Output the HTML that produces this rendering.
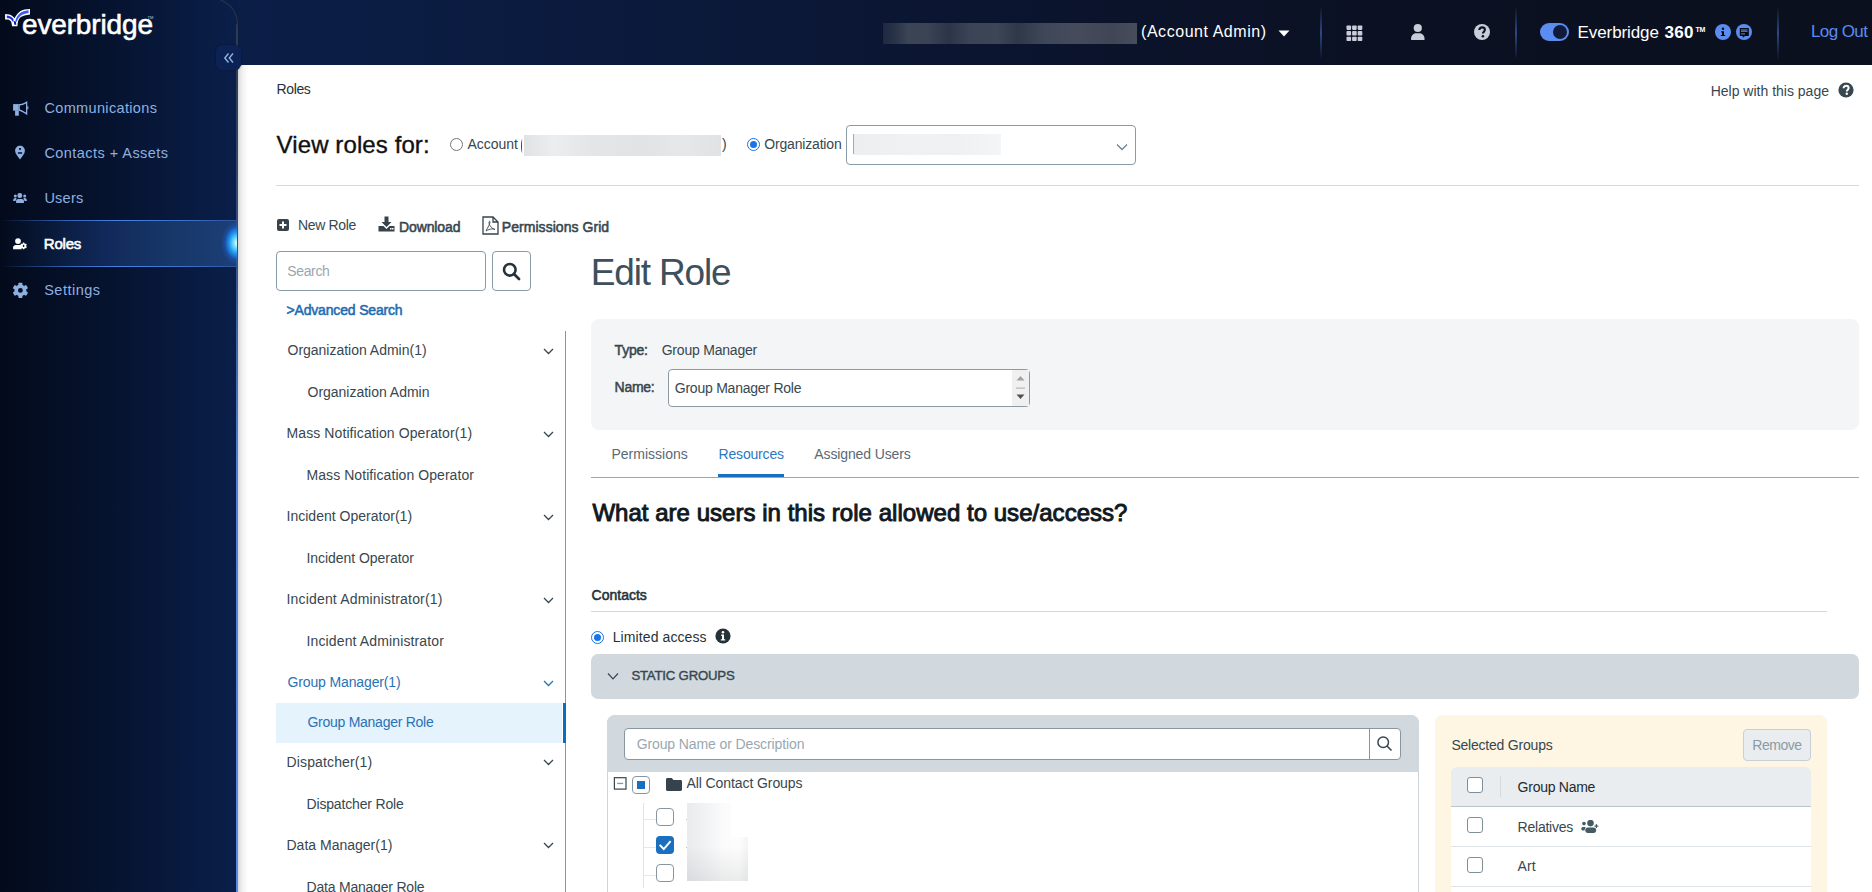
<!DOCTYPE html>
<html><head><meta charset="utf-8"><title>Roles</title>
<style>
*{box-sizing:border-box;margin:0;padding:0}
html,body{width:1872px;height:892px;overflow:hidden;font-family:"Liberation Sans",sans-serif;background:#0b1530;position:relative}
.a{position:absolute}
.t{position:absolute;white-space:nowrap}
</style></head><body>
<div class="a" style="left:150px;top:0;width:100px;height:65px;background:#0a1d46"></div>
<div class="a" style="left:0;top:0;width:238px;height:892px;background:linear-gradient(90deg,#030a1b 0%,#06132f 45%,#0a1f4a 100%);border-top-right-radius:24px;"></div>
<div class="a" style="left:236px;top:24px;width:2px;height:868px;background:linear-gradient(180deg,#2f3a4e 0%,#34507f 25%,#4f7fd6 50%,#5a8ae6 100%);"></div>
<div class="a" style="left:200px;top:-2px;width:38px;height:30px;border-top-right-radius:26px;border-top:1.5px solid #2a3448;border-right:1.5px solid #2a3448;"></div>
<svg class="a" style="left:0;top:0" width="34" height="30" viewBox="0 0 34 30">
<path d="M5.1 14 L9.3 14.6 C11.5 15.2 13.2 16.5 14.6 18.2 C16 15.5 17.5 13.8 18.8 12.6 C20.8 10.8 22.5 10 24.4 9.6 L30 8.9 L30 14.5 L24.4 15.4 C22.5 16 21.2 16.8 20.2 17.6 C18.8 19 18 21 17.7 23.2 L17.4 26.3 L12.1 26.3 L11.2 21.8 C10.5 20.8 9.5 20 8.4 19.6 L5.1 19.6 Z" fill="#ffffff"/>
<path d="M6.8 15.6 L9.2 16 C11 16.5 12.5 17.6 13.6 19.2 L13.4 22 L12.6 21.5 C11.8 20 10.5 18.8 8.8 18.2 L6.8 17.9 Z" fill="#2035d8"/>
<path d="M15.4 20.5 C16.5 17 18.2 14.8 20.2 13 C22.3 11.5 24.5 10.8 28.6 10.2 L28.6 12.9 C25 13.4 22.8 14.2 21 15.6 C19.2 17 17.8 19 16.6 22 Z" fill="#3a5cf2"/>
<path d="M13.8 21 L15.9 21.6 L16.3 24.8 L14.3 24.8 Z" fill="#0a1a9a"/>
</svg>
<div class="t" style="left:22px;top:10.9px;font-size:28px;line-height:28px;color:#fff;letter-spacing:-0.15px;-webkit-text-stroke:0.6px #fff;transform:scaleY(1.0)">everbridge</div>
<div class="t" style="left:147.5px;top:16px;font-size:4px;line-height:4px;color:#ccc">TM</div>
<div class="a" style="left:216px;top:45px;width:25px;height:25px;border-radius:6px;background:#0d2254;box-shadow:0 0 2px rgba(0,0,0,.4);z-index:3"></div>
<svg class="a" style="left:223px;top:52px;z-index:4" width="12" height="12" viewBox="0 0 12 12"><path d="M5.5 1.5 L1.8 6 L5.5 10.5 M10 1.5 L6.3 6 L10 10.5" stroke="#8fb1e3" stroke-width="1.4" fill="none"/></svg>
<div class="t" style="left:44.4px;top:100.91px;font-size:14.5px;line-height:14.5px;font-weight:400;color:#8eb0e0;letter-spacing:0.35px;">Communications</div>
<div class="t" style="left:44.4px;top:146.01px;font-size:14.5px;line-height:14.5px;font-weight:400;color:#8eb0e0;letter-spacing:0.45px;">Contacts + Assets</div>
<div class="t" style="left:44.4px;top:191.11px;font-size:14.5px;line-height:14.5px;font-weight:400;color:#8eb0e0;letter-spacing:0.25px;">Users</div>
<div class="a" style="left:0;top:220px;width:236px;height:47px;background:linear-gradient(90deg,rgba(6,18,45,0) 0%,rgba(12,35,75,.55) 22%,#11295a 45%,#173668 70%,#1c3f76 100%);"></div>
<div class="a" style="left:0;top:220px;width:236px;height:1px;background:linear-gradient(90deg,rgba(74,128,224,0) 0%,#3466b8 30%,#4a80e0 50%,#3c70c8 80%,rgba(58,108,192,.5) 100%);"></div>
<div class="a" style="left:0;top:266px;width:236px;height:1px;background:linear-gradient(90deg,rgba(74,128,224,0) 0%,#3466b8 30%,#4a80e0 50%,#3c70c8 80%,rgba(58,108,192,.5) 100%);"></div>
<div class="a" style="left:221px;top:221px;width:32px;height:44px;background:radial-gradient(ellipse closest-side,#effdff 0%,#6fe0ff 22%,#2198f2 48%,rgba(25,100,220,.45) 75%,rgba(25,100,220,0) 100%);clip-path:inset(0 16px 0 0);"></div>
<div class="t" style="left:43.8px;top:235.64px;font-size:15px;line-height:15px;font-weight:400;color:#ffffff;letter-spacing:-0.2px;-webkit-text-stroke:0.6px #fff;">Roles</div>
<div class="t" style="left:44.2px;top:283.11px;font-size:14.5px;line-height:14.5px;font-weight:400;color:#8eb0e0;letter-spacing:0.5px;">Settings</div>
<svg class="a" style="left:12px;top:100px" width="18" height="17" viewBox="0 0 18 17"><rect x="1.1" y="4.1" width="5.6" height="6.6" fill="#8eb0e0"/><rect x="3.1" y="10.5" width="3.7" height="5.2" fill="#8eb0e0"/><path fill-rule="evenodd" d="M6.5 4.1 C9 4.1 12 3 15.3 0.9 V15.2 C12 13 9 10.7 6.5 10.7 Z M7.8 5.5 C9.8 5.4 11.9 4.7 14 3.5 V12.5 C11.9 11.3 9.8 9.6 7.8 9.4 Z" fill="#8eb0e0"/><rect x="15.2" y="6.4" width="1.2" height="2.8" fill="#8eb0e0"/></svg>
<svg class="a" style="left:14px;top:145px" width="12" height="15" viewBox="0 0 12 15"><path fill-rule="evenodd" d="M6 0.8 C8.8 0.8 10.9 2.9 10.9 5.8 C10.9 8.6 8.2 11.6 6 14.4 C3.8 11.6 1.1 8.6 1.1 5.8 C1.1 2.9 3.2 0.8 6 0.8 Z M6 3.1 A0.95 0.95 0 1 0 6.01 3.1 Z M4.4 7.2 H7.6 A0.75 0.75 0 0 1 7.6 8.7 H4.4 A0.75 0.75 0 0 1 4.4 7.2 Z" fill="#8eb0e0"/></svg>
<svg class="a" style="left:12px;top:192px" width="16" height="12" viewBox="0 0 16 12"><rect x="5.4" y="1.1" width="4.8" height="4.9" rx="2.2" fill="#8eb0e0"/><circle cx="3.3" cy="4" r="1.5" fill="#8eb0e0"/><circle cx="12.7" cy="4" r="1.5" fill="#8eb0e0"/><path d="M4.1 11 V8.8 C4.1 7.6 5 6.9 6.2 6.9 H9.8 C11 6.9 11.9 7.6 11.9 8.8 V11 Z" fill="#8eb0e0"/><path d="M1.1 8.9 C1.1 7.3 1.9 6.1 3.3 6.1 H4.6 L3.5 8.9 Z M14.9 8.9 C14.9 7.3 14.1 6.1 12.7 6.1 H11.4 L12.5 8.9 Z" fill="#8eb0e0"/></svg>
<svg class="a" style="left:12px;top:237px" width="16" height="14" viewBox="0 0 16 14"><circle cx="6" cy="4.1" r="2.9" fill="#fff"/><path d="M1.1 12.2 V10.6 C1.1 9 2.3 7.9 3.9 7.9 H8.4 C9 7.9 9.4 8.1 9.6 8.3 V12.2 Z" fill="#fff"/><rect x="10.7" y="5.6" width="1.8" height="6.6" rx="0.4" fill="#fff" transform="rotate(0 11.6 8.9)"/><rect x="10.7" y="5.6" width="1.8" height="6.6" rx="0.4" fill="#fff" transform="rotate(60 11.6 8.9)"/><rect x="10.7" y="5.6" width="1.8" height="6.6" rx="0.4" fill="#fff" transform="rotate(120 11.6 8.9)"/><circle cx="11.6" cy="8.9" r="2.5" fill="#fff"/><ellipse cx="11.6" cy="8.9" rx="0.8" ry="1.1" fill="#050e24"/></svg>
<svg class="a" style="left:12px;top:282px" width="17" height="17" viewBox="0 0 17 17"><rect x="6.4" y="0.7" width="4" height="15.4" rx="0.8" fill="#8eb0e0" transform="rotate(0 8.4 8.4)"/><rect x="6.4" y="0.7" width="4" height="15.4" rx="0.8" fill="#8eb0e0" transform="rotate(60 8.4 8.4)"/><rect x="6.4" y="0.7" width="4" height="15.4" rx="0.8" fill="#8eb0e0" transform="rotate(120 8.4 8.4)"/><circle cx="8.4" cy="8.4" r="5.9" fill="#8eb0e0"/><circle cx="8.4" cy="8.4" r="2.4" fill="#050e24"/></svg>
<div class="a" style="left:238px;top:0;width:1634px;height:65px;background:linear-gradient(90deg,#0b1e47 0%,#0b1a3c 25%,#0b1530 45%,#0b1123 70%,#0b101e 100%);"></div>
<div class="a" style="left:883px;top:23px;width:254px;height:21px;background:linear-gradient(90deg,#1e2a40 0%,#2a3448 5%,#3b4556 10%,#394354 18%,#2c3547 26%,#3a4456 34%,#3d4657 45%,#2f3849 53%,#3e4758 63%,#454b5b 75%,#404656 90%,#484d5c 100%);"></div>
<div class="t" style="left:1141px;top:24.11px;font-size:16px;line-height:16px;font-weight:400;color:#ffffff;letter-spacing:0.55px;">(Account Admin)</div>
<svg class="a" style="left:1278px;top:30px" width="12" height="7" viewBox="0 0 12 7"><path d="M0.5 0.5 H11.5 L6 6.5 Z" fill="#fff"/></svg>
<div class="a" style="left:1320px;top:6px;width:2px;height:54px;background:linear-gradient(180deg,rgba(60,100,170,0) 0%,#2a4a80 50%,rgba(60,100,170,0) 100%);"></div>
<div class="a" style="left:1515px;top:6px;width:2px;height:54px;background:linear-gradient(180deg,rgba(60,100,170,0) 0%,#2a4a80 50%,rgba(60,100,170,0) 100%);"></div>
<div class="a" style="left:1777px;top:6px;width:2px;height:54px;background:linear-gradient(180deg,rgba(60,100,170,0) 0%,#2a4a80 50%,rgba(60,100,170,0) 100%);"></div>
<svg class="a" style="left:1345.5px;top:24.5px" width="18" height="18" viewBox="0 0 18 18"><rect x="0.5" y="0.5" width="4.6" height="4.4" rx="0.8" fill="#c8cdd8"/><rect x="0.5" y="6.1" width="4.6" height="4.4" rx="0.8" fill="#c8cdd8"/><rect x="0.5" y="11.7" width="4.6" height="4.4" rx="0.8" fill="#c8cdd8"/><rect x="6.1" y="0.5" width="4.6" height="4.4" rx="0.8" fill="#c8cdd8"/><rect x="6.1" y="6.1" width="4.6" height="4.4" rx="0.8" fill="#c8cdd8"/><rect x="6.1" y="11.7" width="4.6" height="4.4" rx="0.8" fill="#c8cdd8"/><rect x="11.7" y="0.5" width="4.6" height="4.4" rx="0.8" fill="#c8cdd8"/><rect x="11.7" y="6.1" width="4.6" height="4.4" rx="0.8" fill="#c8cdd8"/><rect x="11.7" y="11.7" width="4.6" height="4.4" rx="0.8" fill="#c8cdd8"/></svg>
<svg class="a" style="left:1410px;top:23px" width="16" height="18" viewBox="0 0 16 18"><circle cx="7.8" cy="5" r="4.1" fill="#c8cdd8"/><path d="M1 16.2 C1 12.6 3.2 10.2 6 10.2 H9.6 C12.4 10.2 14.6 12.6 14.6 16.2 C14.6 16.8 14.2 17.1 13.7 17.1 H1.9 C1.4 17.1 1 16.8 1 16.2 Z" fill="#c8cdd8"/></svg>
<svg class="a" style="left:1473px;top:23px" width="18" height="18" viewBox="0 0 18 18"><circle cx="9" cy="9" r="8" fill="#c8cdd8"/><path d="M6.3 7 C6.3 5.3 7.5 4.4 9.1 4.4 C10.8 4.4 11.9 5.4 11.9 6.8 C11.9 8.6 9.9 8.8 9.9 10.6" stroke="#0b1223" stroke-width="2.1" fill="none"/><circle cx="9.9" cy="13.3" r="1.3" fill="#0b1223"/></svg>
<div class="a" style="left:1540px;top:23px;width:29px;height:18px;border-radius:9px;background:#5b8cf0"></div>
<div class="a" style="left:1553px;top:25px;width:14px;height:14px;border-radius:50%;background:#0f1b38"></div>
<div class="t" style="left:1577.6px;top:23.78px;font-size:17px;line-height:17px;font-weight:400;color:#ffffff;letter-spacing:-0.1px;">Everbridge</div>
<div class="t" style="left:1664.5px;top:23.78px;font-size:17px;line-height:17px;font-weight:700;color:#ffffff;letter-spacing:0.3px;">360</div>
<div class="t" style="left:1695.5px;top:25.5px;font-size:7px;line-height:7px;font-weight:700;color:#fff;letter-spacing:-0.3px">TM</div>
<svg class="a" style="left:1714px;top:23px" width="18" height="18" viewBox="0 0 18 18"><circle cx="9" cy="9" r="8" fill="#5b8cf0"/><circle cx="9" cy="5.8" r="1.25" fill="#05080f"/><path d="M7.2 8.3 H10 V12 H11.2 V13.1 H6.8 V12 H8 V9.4 H7.2 Z" fill="#05080f"/></svg>
<svg class="a" style="left:1735px;top:23px" width="18" height="18" viewBox="0 0 18 18"><circle cx="9" cy="9" r="8" fill="#5b8cf0"/><path d="M4.8 5.4 C4.8 5.2 5 5 5.2 5 H13.4 C13.6 5 13.8 5.2 13.8 5.4 V12.5 C13.8 12.7 13.6 12.9 13.4 12.9 H10 L7.8 14.8 V12.9 H5.2 C5 12.9 4.8 12.7 4.8 12.5 Z" fill="#05080f"/><rect x="6" y="6.3" width="6.5" height="1.4" fill="#4a6fc0"/><rect x="6" y="8" width="6.5" height="1" fill="#4a6fc0"/><rect x="6" y="10.4" width="4" height="1" fill="#5b8cf0"/></svg>
<div class="t" style="left:1811px;top:23.28px;font-size:17px;line-height:17px;font-weight:400;color:#5b8cf0;letter-spacing:-0.6px;">Log Out</div>
<div class="a" style="left:238px;top:65px;width:1634px;height:827px;background:#fff;border-top-left-radius:5px;"></div>
<div class="a" style="left:238px;top:65px;width:10px;height:827px;background:linear-gradient(90deg,rgba(0,0,0,.16) 0%,rgba(0,0,0,.06) 40%,rgba(0,0,0,0) 100%);border-top-left-radius:5px;"></div>
<div class="t" style="left:276.6px;top:82.27px;font-size:14px;line-height:14px;font-weight:400;color:#263238;letter-spacing:-0.4px;">Roles</div>
<div class="t" style="left:1710.7px;top:84.07px;font-size:14px;line-height:14px;font-weight:400;color:#37474f;letter-spacing:0px;">Help with this page</div>
<svg class="a" style="left:1838px;top:82px" width="16" height="16" viewBox="0 0 16 16"><circle cx="8" cy="8" r="7.6" fill="#37474f"/><path d="M5.6 6.2 C5.6 4.6 6.7 3.8 8.1 3.8 C9.6 3.8 10.6 4.7 10.6 6 C10.6 7.6 8.8 7.8 8.8 9.4" stroke="#fff" stroke-width="2" fill="none"/><circle cx="8.8" cy="11.8" r="1.2" fill="#fff"/></svg>
<div class="t" style="left:276.6px;top:132.57px;font-size:24px;line-height:24px;font-weight:400;color:#111111;letter-spacing:0.1px;-webkit-text-stroke:0.35px #111;">View roles for:</div>
<div class="a" style="left:450px;top:138px;width:13px;height:13px;border-radius:50%;border:1px solid #767676;background:#fff"></div>
<div class="t" style="left:467.4px;top:137.17px;font-size:14px;line-height:14px;font-weight:400;color:#37474f;letter-spacing:0px;">Account</div>
<div class="a" style="left:521px;top:139px;width:3px;height:14px;border-left:1px solid #37474f;border-radius:50% 0 0 50%"></div>
<div class="a" style="left:524px;top:135px;width:197px;height:21px;background:linear-gradient(90deg,#e1e2e3 0%,#ecedee 15%,#e4e5e6 35%,#e2e3e4 60%,#e6e7e8 80%,#e1e2e3 100%)"></div>
<div class="t" style="left:722px;top:137.17px;font-size:14px;line-height:14px;font-weight:400;color:#37474f;letter-spacing:0px;">)</div>
<div class="a" style="left:747px;top:138px;width:13px;height:13px;border-radius:50%;border:1px solid #1a73e8;background:#fff"></div>
<div class="a" style="left:750px;top:141px;width:7px;height:7px;border-radius:50%;background:#1a73e8"></div>
<div class="t" style="left:764.2px;top:137.17px;font-size:14px;line-height:14px;font-weight:400;color:#37474f;letter-spacing:-0.17px;">Organization</div>
<div class="a" style="left:846px;top:125px;width:290px;height:40px;border:1px solid #8a9ba8;border-radius:4px;background:#fff"></div>
<div class="a" style="left:853px;top:134px;width:1px;height:20px;background:#c8a37a"></div>
<div class="a" style="left:854px;top:134px;width:147px;height:21px;background:linear-gradient(90deg,#eceef0 0%,#f0f1f3 40%,#eef0f2 70%,#f4f5f6 100%)"></div>
<svg class="a" style="left:1116px;top:143px" width="12" height="8" viewBox="0 0 12 8"><path d="M1 1.5 L6 6.5 L11 1.5" stroke="#6f8494" stroke-width="1.3" fill="none"/></svg>
<div class="a" style="left:276px;top:185px;width:1583px;height:1px;background:#d3dde1"></div>
<svg class="a" style="left:277px;top:219px" width="12" height="12" viewBox="0 0 12 12"><rect x="0" y="0" width="12" height="12" rx="2" fill="#36434d"/><path d="M6 2.5 V9.5 M2.5 6 H9.5" stroke="#fff" stroke-width="2"/></svg>
<div class="t" style="left:298px;top:218.47px;font-size:14px;line-height:14px;font-weight:400;color:#37474f;letter-spacing:-0.34px;">New Role</div>
<svg class="a" style="left:378px;top:216px" width="17" height="16" viewBox="0 0 17 16"><path d="M6.5 0.5 H10.5 V6 H13.5 L8.5 11 L3.5 6 H6.5 Z" fill="#36434d"/><path d="M0.5 10 H5.5 L8.5 13 L11.5 10 H16.5 V15.5 H0.5 Z" fill="#36434d"/><rect x="12" y="12" width="1.5" height="1.5" fill="#fff"/><rect x="14" y="12" width="1.5" height="1.5" fill="#fff"/></svg>
<div class="t" style="left:399px;top:219.97px;font-size:14px;line-height:14px;font-weight:400;color:#37474f;letter-spacing:-0.12px;-webkit-text-stroke:0.55px #37474f;">Download</div>
<svg class="a" style="left:482px;top:216px" width="17" height="19" viewBox="0 0 17 19"><path d="M1 1 H11 L16 6 V18 H1 Z M11 1 V6 H16" stroke="#36434d" stroke-width="1.3" fill="#fff"/><path d="M4 15 C6 11 8 8 8 6 C8 5 7 5 7 6.5 C7 9 10 13 13 13.5 C12 12.5 8 12.5 4 15" stroke="#36434d" stroke-width="0.9" fill="none"/></svg>
<div class="t" style="left:501.8px;top:219.97px;font-size:14px;line-height:14px;font-weight:400;color:#37474f;letter-spacing:0.05px;-webkit-text-stroke:0.55px #37474f;">Permissions Grid</div>
<div class="a" style="left:276px;top:251px;width:210px;height:40px;border:1px solid #8a9ba8;border-radius:4px;background:#fff"></div>
<div class="t" style="left:287.2px;top:263.97px;font-size:14px;line-height:14px;font-weight:400;color:#9aa6ae;letter-spacing:-0.34px;">Search</div>
<div class="a" style="left:492px;top:251px;width:39px;height:40px;border:1px solid #8a9ba8;border-radius:4px;background:#fff"></div>
<svg class="a" style="left:502px;top:262px" width="19" height="19" viewBox="0 0 19 19"><circle cx="7.8" cy="7.8" r="5.8" stroke="#263238" stroke-width="2.6" fill="none"/><path d="M12 12 L17 17" stroke="#263238" stroke-width="2.8" stroke-linecap="round"/></svg>
<div class="t" style="left:286.5px;top:302.77px;font-size:14px;line-height:14px;font-weight:400;color:#1f6db3;letter-spacing:-0.17px;-webkit-text-stroke:0.55px #1f6db3;">&gt;Advanced Search</div>
<div class="a" style="left:565px;top:331px;width:1px;height:561px;background:#8796a1"></div>
<div class="a" style="left:276px;top:703px;width:286px;height:40px;background:#e5f3fc"></div>
<div class="a" style="left:563px;top:703px;width:2.5px;height:40px;background:#0a6ebd"></div>
<div class="t" style="left:287.5px;top:343.17px;font-size:14px;line-height:14px;font-weight:400;color:#37474f;letter-spacing:-0.01px;">Organization Admin(1)</div>
<div class="t" style="left:307.5px;top:385.17px;font-size:14px;line-height:14px;font-weight:400;color:#37474f;letter-spacing:-0.01px;">Organization Admin</div>
<svg class="a" style="left:543px;top:347.5px" width="11" height="7" viewBox="0 0 11 7"><path d="M1 1 L5.5 5.5 L10 1" stroke="#37474f" stroke-width="1.3" fill="none"/></svg>
<div class="t" style="left:286.5px;top:426.17px;font-size:14px;line-height:14px;font-weight:400;color:#37474f;letter-spacing:0.097px;">Mass Notification Operator(1)</div>
<div class="t" style="left:306.5px;top:467.97px;font-size:14px;line-height:14px;font-weight:400;color:#37474f;letter-spacing:0.069px;">Mass Notification Operator</div>
<svg class="a" style="left:543px;top:430.5px" width="11" height="7" viewBox="0 0 11 7"><path d="M1 1 L5.5 5.5 L10 1" stroke="#37474f" stroke-width="1.3" fill="none"/></svg>
<div class="t" style="left:286.5px;top:509.37px;font-size:14px;line-height:14px;font-weight:400;color:#37474f;letter-spacing:0.015px;">Incident Operator(1)</div>
<div class="t" style="left:306.5px;top:551.27px;font-size:14px;line-height:14px;font-weight:400;color:#37474f;letter-spacing:-0.044px;">Incident Operator</div>
<svg class="a" style="left:543px;top:513.7px" width="11" height="7" viewBox="0 0 11 7"><path d="M1 1 L5.5 5.5 L10 1" stroke="#37474f" stroke-width="1.3" fill="none"/></svg>
<div class="t" style="left:286.5px;top:592.27px;font-size:14px;line-height:14px;font-weight:400;color:#37474f;letter-spacing:0.173px;">Incident Administrator(1)</div>
<div class="t" style="left:306.5px;top:634.17px;font-size:14px;line-height:14px;font-weight:400;color:#37474f;letter-spacing:0.132px;">Incident Administrator</div>
<svg class="a" style="left:543px;top:596.6px" width="11" height="7" viewBox="0 0 11 7"><path d="M1 1 L5.5 5.5 L10 1" stroke="#37474f" stroke-width="1.3" fill="none"/></svg>
<div class="t" style="left:287.5px;top:675.17px;font-size:14px;line-height:14px;font-weight:400;color:#2a72b5;letter-spacing:-0.134px;">Group Manager(1)</div>
<div class="t" style="left:307.5px;top:714.87px;font-size:14px;line-height:14px;font-weight:400;color:#2a72b5;letter-spacing:-0.268px;">Group Manager Role</div>
<svg class="a" style="left:543px;top:679.5px" width="11" height="7" viewBox="0 0 11 7"><path d="M1 1 L5.5 5.5 L10 1" stroke="#2a72b5" stroke-width="1.3" fill="none"/></svg>
<div class="t" style="left:286.5px;top:754.97px;font-size:14px;line-height:14px;font-weight:400;color:#37474f;letter-spacing:0.136px;">Dispatcher(1)</div>
<div class="t" style="left:306.5px;top:797.37px;font-size:14px;line-height:14px;font-weight:400;color:#37474f;letter-spacing:-0.165px;">Dispatcher Role</div>
<svg class="a" style="left:543px;top:759.3px" width="11" height="7" viewBox="0 0 11 7"><path d="M1 1 L5.5 5.5 L10 1" stroke="#37474f" stroke-width="1.3" fill="none"/></svg>
<div class="t" style="left:286.5px;top:837.67px;font-size:14px;line-height:14px;font-weight:400;color:#37474f;letter-spacing:0.002px;">Data Manager(1)</div>
<div class="t" style="left:306.5px;top:879.77px;font-size:14px;line-height:14px;font-weight:400;color:#37474f;letter-spacing:-0.207px;">Data Manager Role</div>
<svg class="a" style="left:543px;top:842.0px" width="11" height="7" viewBox="0 0 11 7"><path d="M1 1 L5.5 5.5 L10 1" stroke="#37474f" stroke-width="1.3" fill="none"/></svg>
<div class="t" style="left:590.8px;top:253.97px;font-size:37px;line-height:37px;font-weight:400;color:#3d505c;letter-spacing:-1.16px;">Edit Role</div>
<div class="a" style="left:591px;top:319px;width:1268px;height:111px;background:#f4f5f7;border-radius:8px"></div>
<div class="t" style="left:614.6px;top:343.37px;font-size:14px;line-height:14px;font-weight:400;color:#37474f;letter-spacing:-0.23px;-webkit-text-stroke:0.5px #37474f;">Type:</div>
<div class="t" style="left:661.7px;top:343.37px;font-size:14px;line-height:14px;font-weight:400;color:#37474f;letter-spacing:-0.21px;">Group Manager</div>
<div class="t" style="left:614.6px;top:380.17px;font-size:14px;line-height:14px;font-weight:400;color:#37474f;letter-spacing:-0.28px;-webkit-text-stroke:0.5px #37474f;">Name:</div>
<div class="a" style="left:668px;top:369px;width:362px;height:38px;border:1px solid #8a9ba8;border-radius:4px;background:#fff"></div>
<div class="a" style="left:1012px;top:370px;width:17px;height:36px;background:#f0f0f0"></div>
<svg class="a" style="left:1014px;top:373px" width="13" height="30" viewBox="0 0 13 30"><path d="M2.5 7.5 L6.5 3 L10.5 7.5 Z" fill="#a0a0a0"/><rect x="2" y="14.5" width="9" height="1.2" fill="#b5b5b5"/><path d="M2.5 21.5 L6.5 26 L10.5 21.5 Z" fill="#505050"/></svg>
<div class="t" style="left:674.8px;top:380.97px;font-size:14px;line-height:14px;font-weight:400;color:#37474f;letter-spacing:-0.24px;">Group Manager Role</div>
<div class="t" style="left:611.5px;top:447.47px;font-size:14px;line-height:14px;font-weight:400;color:#5a6a75;letter-spacing:0px;">Permissions</div>
<div class="t" style="left:718.6px;top:447.47px;font-size:14px;line-height:14px;font-weight:400;color:#2a79c2;letter-spacing:-0.19px;">Resources</div>
<div class="t" style="left:814.3px;top:447.47px;font-size:14px;line-height:14px;font-weight:400;color:#5a6a75;letter-spacing:-0.12px;">Assigned Users</div>
<div class="a" style="left:591px;top:477px;width:1268px;height:1px;background:#9aa8b2"></div>
<div class="a" style="left:718px;top:474px;width:66px;height:3px;background:#1a6fbf"></div>
<div class="t" style="left:592.4px;top:500.57px;font-size:24px;line-height:24px;font-weight:400;color:#111820;letter-spacing:0.03px;-webkit-text-stroke:0.95px #111820;">What are users in this role allowed to use/access?</div>
<div class="t" style="left:591.6px;top:587.67px;font-size:14px;line-height:14px;font-weight:400;color:#263238;letter-spacing:0px;-webkit-text-stroke:0.55px #263238;">Contacts</div>
<div class="a" style="left:591px;top:611px;width:1236px;height:1px;background:#cfd8dc"></div>
<div class="a" style="left:591px;top:631px;width:13px;height:13px;border-radius:50%;border:1px solid #1a73e8;background:#fff"></div>
<div class="a" style="left:594px;top:634px;width:7px;height:7px;border-radius:50%;background:#1a73e8"></div>
<div class="t" style="left:612.7px;top:629.87px;font-size:14px;line-height:14px;font-weight:400;color:#263238;letter-spacing:0.1px;">Limited access</div>
<svg class="a" style="left:715px;top:628px" width="16" height="16" viewBox="0 0 16 16"><circle cx="8" cy="8" r="7.6" fill="#263238"/><circle cx="8" cy="4.3" r="1.3" fill="#fff"/><path d="M6.2 6.6 H9 V11.3 H10.2 V12.6 H5.8 V11.3 H7 V8 H6.2 Z" fill="#fff"/></svg>
<div class="a" style="left:591px;top:654px;width:1268px;height:45px;background:#d1d8de;border-radius:7px"></div>
<svg class="a" style="left:607px;top:672px" width="12" height="9" viewBox="0 0 12 9"><path d="M1 1.5 L6 6.8 L11 1.5" stroke="#37474f" stroke-width="1.2" fill="none"/></svg>
<div class="t" style="left:631.4px;top:669.28px;font-size:13.2px;line-height:13.2px;font-weight:400;color:#37474f;letter-spacing:-0.2px;-webkit-text-stroke:0.4px #37474f;">STATIC GROUPS</div>
<div class="a" style="left:607px;top:715px;width:812px;height:220px;background:#fff;border:1px solid #cdd5db;border-radius:8px 8px 0 0"></div>
<div class="a" style="left:607px;top:715px;width:812px;height:57px;background:#d1d8de;border-radius:8px 8px 0 0"></div>
<div class="a" style="left:624px;top:728px;width:777px;height:32px;border:1px solid #8796a1;border-radius:4px;background:#fff"></div>
<div class="a" style="left:1369px;top:729px;width:1px;height:30px;background:#8796a1"></div>
<svg class="a" style="left:1376px;top:735px" width="17" height="17" viewBox="0 0 17 17"><circle cx="7.2" cy="7.2" r="5.3" stroke="#37474f" stroke-width="1.5" fill="none"/><path d="M11 11 L15.5 15.5" stroke="#37474f" stroke-width="1.6"/></svg>
<div class="t" style="left:636.7px;top:736.67px;font-size:14px;line-height:14px;font-weight:400;color:#9aa7b0;letter-spacing:-0.11px;">Group Name or Description</div>
<svg class="a" style="left:613px;top:777px" width="14" height="13" viewBox="0 0 14 13"><rect x="1.4" y="0.7" width="11.6" height="11.4" fill="#fff" stroke="#37474f" stroke-width="1.2"/><rect x="4.2" y="5.8" width="6" height="1.3" fill="#8796a1"/></svg>
<div class="a" style="left:632px;top:776px;width:18px;height:18px;border:1px solid #8796a1;border-radius:4px;background:#fff"></div>
<div class="a" style="left:637px;top:781px;width:8px;height:8px;background:#1a6fbf"></div>
<svg class="a" style="left:666px;top:778px" width="16" height="13" viewBox="0 0 16 13"><path d="M0 1.5 C0 0.7 0.6 0 1.4 0 H5.8 L7.5 2 H14.6 C15.4 2 16 2.6 16 3.4 V11.6 C16 12.4 15.4 13 14.6 13 H1.4 C0.6 13 0 12.4 0 11.6 Z" fill="#36434d"/></svg>
<div class="t" style="left:686.4px;top:776.17px;font-size:14px;line-height:14px;font-weight:400;color:#37474f;letter-spacing:-0.08px;">All Contact Groups</div>
<div class="a" style="left:643px;top:803px;width:1px;height:85px;background:#dde3e7"></div>
<div class="a" style="left:643px;top:818.5px;width:13px;height:1px;background:#e3e8eb"></div>
<div class="a" style="left:643px;top:846.5px;width:13px;height:1px;background:#e3e8eb"></div>
<div class="a" style="left:643px;top:874.5px;width:13px;height:1px;background:#e3e8eb"></div>
<div class="a" style="left:656px;top:808px;width:18px;height:18px;border:1px solid #8796a1;border-radius:4px;background:#fff"></div>
<div class="a" style="left:656px;top:836px;width:18px;height:18px;border-radius:4px;background:#1a6fbf"></div>
<svg class="a" style="left:656px;top:836px" width="18" height="18" viewBox="0 0 18 18"><path d="M3.6 8.8 L7.8 13 L14.6 5.2" stroke="#fff" stroke-width="1.9" fill="none"/></svg>
<div class="a" style="left:656px;top:864px;width:18px;height:18px;border:1px solid #8796a1;border-radius:4px;background:#fff"></div>
<div class="a" style="left:687px;top:803px;width:61px;height:78px;clip-path:polygon(0 0,44px 0,44px 34px,61px 34px,61px 78px,0 78px);background:linear-gradient(180deg,rgba(0,0,0,0) 0%,rgba(0,0,0,0) 55%,rgba(20,30,40,.08) 100%),linear-gradient(90deg,#e9ebed 0%,#f1f2f3 30%,#fbfbfb 60%,#fdfdfd 85%,#f3f4f5 100%)"></div>
<div class="a" style="left:686px;top:818.5px;width:1px;height:1.5px;background:rgba(240,150,60,.7)"></div>
<div class="a" style="left:686px;top:846.5px;width:1px;height:1.5px;background:rgba(240,150,60,.7)"></div>
<div class="a" style="left:1435px;top:715px;width:392px;height:177px;background:#fef5e2;border-radius:8px 8px 0 0"></div>
<div class="t" style="left:1451.4px;top:738.37px;font-size:14px;line-height:14px;font-weight:400;color:#37474f;letter-spacing:-0.21px;">Selected Groups</div>
<div class="a" style="left:1743px;top:729px;width:68px;height:32px;border:1px solid #c6d0d6;border-radius:4px;background:#e9edf0"></div>
<div class="t" style="left:1752.3px;top:738.37px;font-size:14px;line-height:14px;font-weight:400;color:#8d9aa3;letter-spacing:-0.46px;">Remove</div>
<div class="a" style="left:1451px;top:767px;width:360px;height:40px;background:#e9edf0;border-radius:6px 6px 0 0"></div>
<div class="a" style="left:1451px;top:806px;width:360px;height:1px;background:#b9c4cb"></div>
<div class="a" style="left:1451px;top:807px;width:360px;height:85px;background:#fff"></div>
<div class="a" style="left:1451px;top:846px;width:360px;height:1px;background:#dde3e7"></div>
<div class="a" style="left:1451px;top:886px;width:360px;height:1px;background:#dde3e7"></div>
<div class="a" style="left:1500px;top:776px;width:1px;height:21px;background:#d3dbe0"></div>
<div class="a" style="left:1467px;top:777px;width:16px;height:16px;border:1px solid #7f8f9a;border-radius:3px;background:#fff"></div>
<div class="a" style="left:1467px;top:817px;width:16px;height:16px;border:1px solid #7f8f9a;border-radius:3px;background:#fff"></div>
<div class="a" style="left:1467px;top:857px;width:16px;height:16px;border:1px solid #7f8f9a;border-radius:3px;background:#fff"></div>
<div class="t" style="left:1517.6px;top:779.67px;font-size:14px;line-height:14px;font-weight:400;color:#1f2a30;letter-spacing:-0.26px;">Group Name</div>
<div class="t" style="left:1517.6px;top:819.57px;font-size:14px;line-height:14px;font-weight:400;color:#37474f;letter-spacing:-0.24px;">Relatives</div>
<svg class="a" style="left:1581px;top:820px" width="19" height="14" viewBox="0 0 19 14"><circle cx="9.5" cy="3.1" r="3.3" fill="#455a64"/><rect x="4.3" y="7.6" width="10.8" height="5.3" rx="2.6" fill="#455a64"/><circle cx="3" cy="3.6" r="1.8" fill="#455a64"/><path d="M0.3 9 C0.3 7.6 1.2 7 2.6 7 H4.6 L3.4 10.4 H1.5 C0.8 10.4 0.3 9.9 0.3 9 Z" fill="#455a64"/><rect x="13.4" y="5.5" width="4" height="1.2" fill="#455a64"/><rect x="14.8" y="4.1" width="1.2" height="4" fill="#455a64"/></svg>
<div class="t" style="left:1517.6px;top:859.37px;font-size:14px;line-height:14px;font-weight:400;color:#37474f;letter-spacing:0.13px;">Art</div>
</body></html>
